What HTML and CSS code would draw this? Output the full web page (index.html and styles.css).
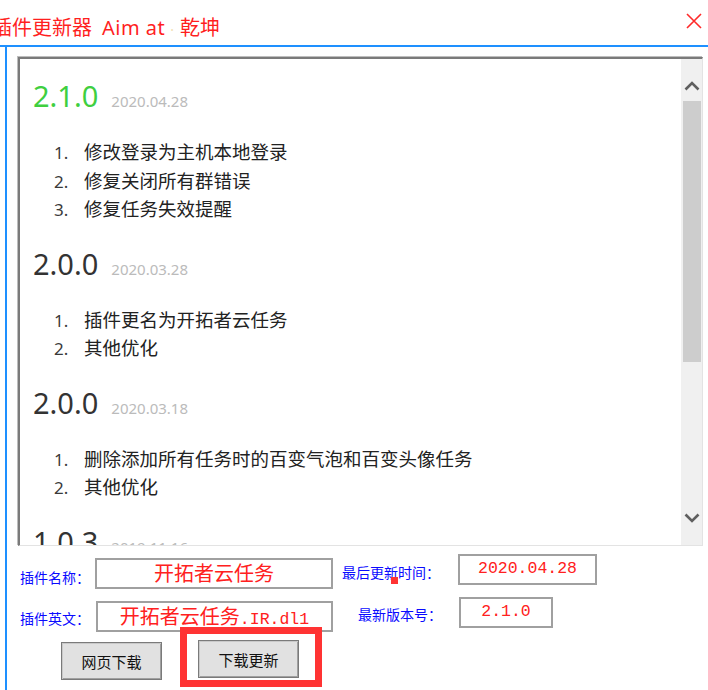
FILE: index.html
```html
<!DOCTYPE html>
<html lang="zh-CN">
<head>
    <meta charset="UTF-8">
    <meta name="viewport" content="width=device-width, initial-scale=1.0">
    <title>插件更新器</title>
    <link rel="stylesheet" href="styles.css">
</head>
<body>
    <div class="window">
        <div class="titlebar">
            <span class="title">插件更新器<span class="latin">Aim at</span><span class="dot">·</span>乾坤</span>
            <svg class="close" width="16" height="16" viewBox="0 0 16 16">
                <path d="M1 1 L15 15 M15 1 L1 15" stroke="#ff2a2a" stroke-width="1.6" fill="none"/>
            </svg>
        </div>

        <div class="frame">
            <div class="pane">
                <div class="log">
                    <div class="log-body">
                        <h2 class="version latest">2.1.0<span class="date">2020.04.28</span></h2>
                        <ol class="changes">
                            <li>修改登录为主机本地登录</li>
                            <li>修复关闭所有群错误</li>
                            <li>修复任务失效提醒</li>
                        </ol>
                        <h2 class="version">2.0.0<span class="date">2020.03.28</span></h2>
                        <ol class="changes">
                            <li>插件更名为开拓者云任务</li>
                            <li>其他优化</li>
                        </ol>
                        <h2 class="version">2.0.0<span class="date">2020.03.18</span></h2>
                        <ol class="changes">
                            <li>删除添加所有任务时的百变气泡和百变头像任务</li>
                            <li>其他优化</li>
                        </ol>
                        <h2 class="version">1.0.3<span class="date">2019.11.16</span></h2>
                    </div>
                    <div class="scrollbar">
                        <div class="scroll-btn up">
                            <svg width="16" height="10" viewBox="0 0 16 10"><path d="M1.5 8.5 L8 2 L14.5 8.5" stroke="#5f5f5f" stroke-width="2.6" fill="none"/></svg>
                        </div>
                        <div class="thumb"></div>
                        <div class="track"></div>
                        <div class="scroll-btn down">
                            <svg width="16" height="10" viewBox="0 0 16 10"><path d="M1.5 1.5 L8 8 L14.5 1.5" stroke="#5f5f5f" stroke-width="2.6" fill="none"/></svg>
                        </div>
                    </div>
                </div>

                <div class="form-row row-one">
                    <span class="label name-label">插件名称：</span>
                    <div class="field name-field">开拓者云任务</div>
                    <span class="label time-label">最后更新时间：</span>
                    <div class="field time-field mono">2020.04.28</div>
                </div>
                <div class="form-row row-two">
                    <span class="label en-label">插件英文：</span>
                    <div class="field en-field">开拓者云任务<span class="mono">.IR.dl1</span></div>
                    <span class="label ver-label">最新版本号：</span>
                    <div class="field ver-field mono">2.1.0</div>
                </div>
                <div class="form-row buttons">
                    <button class="btn web-btn">网页下载</button>
                    <button class="btn update-btn">下载更新</button>
                </div>
            </div>
        </div>

        <div class="red-square"></div>
        <div class="highlight"></div>
    </div>
</body>
</html>
```

FILE: styles.css
```css
* {
    box-sizing: border-box;
}
body {
    margin: 0;
    background-color: white;
    font-family: "Noto Sans CJK SC", sans-serif;
}
.window {
    position: relative;
    width: 708px;
    height: 690px;
    overflow: hidden;
    background-color: white;
}
.titlebar {
    height: 45px;
    display: flex;
    justify-content: space-between;
    align-items: flex-start;
}
.title {
    margin-left: -8px;
    padding-top: 16px;
    font-family: "Noto Sans", "Noto Sans CJK SC", sans-serif;
    font-size: 20px;
    line-height: 24px;
    color: #ff1f1f;
    white-space: nowrap;
}
.title .latin {
    margin-left: 10px;
    letter-spacing: 0.5px;
}
.title .dot {
    color: #f3dfb4;
    font-size: 14px;
    margin: 0 6px 0 5px;
}
.close {
    margin-top: 13px;
    margin-right: 6px;
}
.frame {
    border-top: 2px solid #1e90ff;
    height: 645px;
}
.pane {
    margin-left: 5px;
    border-left: 2px solid #1e90ff;
    height: 100%;
    padding-top: 10px;
}

/* change log box */
.log {
    margin-left: 11px;
    width: 685px;
    height: 489px;
    display: flex;
    border-top: 2px solid #7a7a7a;
    border-left: 2px solid #7a7a7a;
    border-right: 1px solid #e3e3e3;
    border-bottom: 1px solid #e3e3e3;
    box-shadow: -1px -1px 0 #bdbdbd;
}
.log-body {
    flex: 1;
    overflow: hidden;
    padding: 17px 0 0 13px;
}
.version {
    margin: 0;
    height: 40px;
    display: flex;
    align-items: baseline;
    font-family: "Noto Sans", sans-serif;
    font-weight: 400;
    font-size: 29px;
    line-height: 40px;
    color: #333;
    white-space: nowrap;
}
.version.latest {
    color: #3fcf3f;
}
.date {
    margin-left: 13px;
    font-size: 15px;
    line-height: 1;
    color: #bbbbbb;
}
.changes {
    list-style: none;
    counter-reset: item;
    margin: 21px 0;
    padding: 0 0 0 21px;
}
.changes li {
    counter-increment: item;
    display: flex;
    align-items: baseline;
    height: 28.5px;
    font-size: 18.5px;
    line-height: 28.5px;
    color: #222;
    white-space: nowrap;
}
.changes li::before {
    content: counter(item) ".";
    width: 30px;
    flex-shrink: 0;
    font-family: "Noto Sans", sans-serif;
    font-size: 17px;
    color: #3a3a3a;
}

/* scrollbar */
.scrollbar {
    width: 21px;
    display: flex;
    flex-direction: column;
    align-items: center;
    background-color: #f0f0f0;
}
.scroll-btn {
    display: flex;
    justify-content: center;
}
.scroll-btn.up {
    height: 42px;
    padding-top: 22px;
}
.thumb {
    width: 18px;
    height: 261px;
    background-color: #cdcdcd;
}
.track {
    flex: 1;
}
.scroll-btn.down {
    height: 40px;
    padding-top: 8px;
}

/* plugin info form */
.form-row {
    display: flex;
    align-items: flex-start;
}
.row-one {
    margin-top: 8px;
}
.row-two {
    margin-top: 8px;
}
.label {
    font-size: 14px;
    line-height: 20px;
    color: #0a0aff;
    white-space: nowrap;
}
.field {
    height: 31px;
    border: 2px solid #a0a0a0;
    color: #ff2020;
    font-size: 20px;
    line-height: 26px;
    text-align: center;
    white-space: nowrap;
}
.mono {
    font-family: "Liberation Mono", monospace;
    font-size: 16.5px;
}
.name-label {
    margin-left: 13px;
    margin-top: 13px;
    width: 75px;
}
.name-field {
    margin-top: 4px;
    width: 238px;
}
.time-label {
    margin-left: 9px;
    margin-top: 8px;
    width: 116px;
}
.time-field {
    width: 139px;
}
.en-label {
    margin-left: 13px;
    margin-top: 11px;
    width: 76px;
}
.en-field {
    margin-top: 4px;
    width: 237px;
}
.ver-label {
    margin-left: 25px;
    margin-top: 7px;
    width: 101px;
}
.ver-field {
    width: 94px;
}
.buttons {
    margin-top: 8px;
}
.btn {
    width: 101px;
    height: 38px;
    padding: 0;
    font-family: "Noto Sans CJK SC", sans-serif;
    font-size: 15px;
    color: #111;
    background-color: #e1e1e1;
    border: 1px solid #7a7a7a;
    box-shadow: inset 1px 1px 0 #c9c9c9, inset -1px -1px 0 #a0a0a0;
}
.web-btn {
    margin-left: 54px;
    margin-top: 2px;
}
.update-btn {
    margin-left: 36px;
}

/* markers drawn over the form */
.red-square {
    position: absolute;
    left: 391px;
    top: 577px;
    width: 7px;
    height: 7px;
    background-color: #ff3333;
}
.highlight {
    position: absolute;
    left: 180px;
    top: 627px;
    width: 142px;
    height: 60px;
    border: 7px solid #ff3333;
}
```
